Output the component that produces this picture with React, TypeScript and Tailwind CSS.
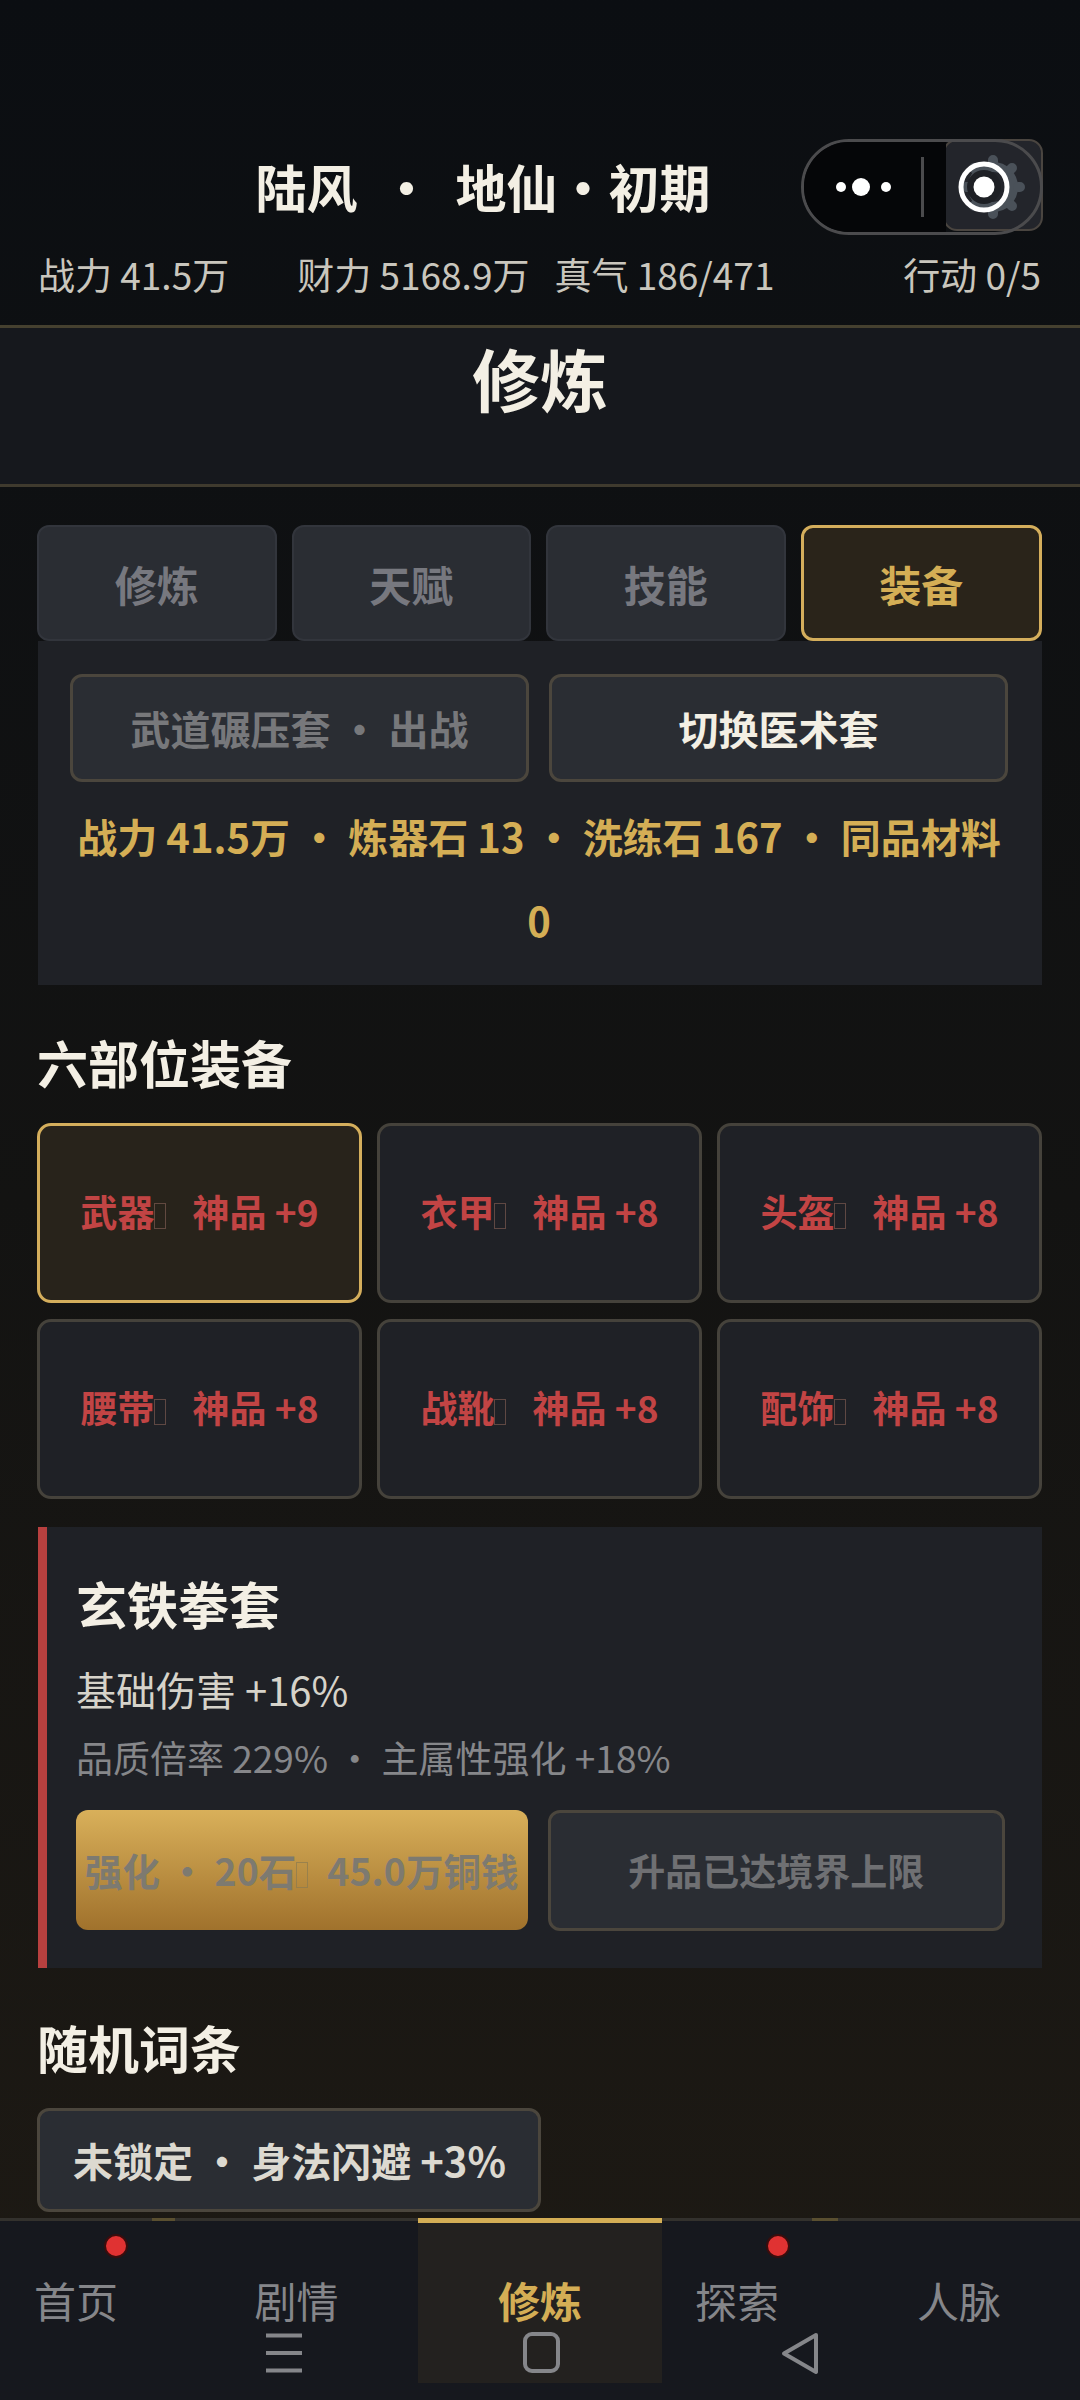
const Tofu = ({ c = "border-[#7a5a50]" }: { c?: string }) => (
  <span className={`inline-block w-[12px] h-[26px] border-[1.5px] ${c} opacity-70 align-[-2px] ml-[0px] mr-[0px]`} />
);

const equip = [
  ["武器", "神品 +9", true],
  ["衣甲", "神品 +8", false],
  ["头盔", "神品 +8", false],
  ["腰带", "神品 +8", false],
  ["战靴", "神品 +8", false],
  ["配饰", "神品 +8", false],
] as const;

const tabs = ["修炼", "天赋", "技能"];

export default function App() {
  return (
    <div
      className="relative w-[1080px] h-[2400px] overflow-hidden flex flex-col bg-gradient-to-b from-[#0b0e12] via-[#131312] to-[#1e1a14] text-[#f3efe4]"
      style={{ fontFamily: '"Noto Sans CJK SC", "Noto Sans", sans-serif' }}
    >
      {/* header */}
      <header className="relative h-[328px] shrink-0 border-b-[3px] border-[#45402f] pt-[148px]">
        <div className="h-[76px] flex items-center justify-center pr-[114px] text-[51px] leading-[76px] font-bold whitespace-pre">
          陆风 <span className="mx-[12px]">·</span> 地仙·初期
        </div>
        <div className="mt-[25px] flex h-[50px] items-center pl-[38px] text-[37px] leading-[50px] text-[#c9c6bd] whitespace-pre">
          <span>战力 41.5万</span>
          <span className="ml-[68px]">财力 5168.9万</span>
          <span className="ml-[25px]">真气 186/471</span>
          <span className="ml-auto mr-[39px]">行动 0/5</span>
        </div>
        {/* settings button + capsule */}
        <div className="absolute left-[943px] top-[139px] w-[100px] h-[92px] rounded-[14px] bg-[#23252b] border-[2px] border-[#4a4540]" />
        <div className="absolute left-[801px] top-[139px] w-[242px] h-[96px] rounded-full border-[3px] border-[#4b4b4d] overflow-hidden">
          <div className="w-[142px] h-full bg-[#050608]" />
        </div>
        <svg className="absolute left-[802px] top-[139px]" width="241" height="96" viewBox="0 0 241 96">
          <g transform="translate(191 48)" stroke="#4a5159" fill="none">
            <circle r="20" strokeWidth="10" />
            <g strokeWidth="10" strokeLinecap="round">
              <path d="M0 -27V-25M0 27V25M27 0H25M-27 0H-25M19 -19L18 -18M19 19L18 18M-19 -19L-18 -18M-19 19L-18 18" />
            </g>
          </g>
          <circle cx="182" cy="48" r="17" fill="#1e2025" />
          <rect x="119" y="18" width="3" height="60" fill="#4b4b4d" />
          <circle cx="39" cy="48" r="5" fill="#fff" />
          <circle cx="59" cy="48" r="9" fill="#fff" />
          <circle cx="84" cy="48" r="5" fill="#fff" />
          <circle cx="182" cy="48" r="23" fill="none" stroke="#fff" strokeWidth="5" />
          <circle cx="182" cy="48" r="10.5" fill="#fff" />
        </svg>
      </header>

      {/* page title */}
      <div className="h-[159px] shrink-0 bg-[#16181d] border-b-[3px] border-[#3f3a2e] text-center text-[68px] leading-[100px] font-bold">
        修炼
      </div>

      {/* content */}
      <main className="flex-1 min-h-0 overflow-hidden pl-[37px] pr-[38px] pt-[38px]">
        <div className="flex gap-[15px]">
          {tabs.map((t) => (
            <div key={t} className="flex-1 h-[116px] rounded-[12px] bg-[#2a2d33] border-[2px] border-[#32353c] flex items-center justify-center text-[42px] font-bold text-[#77787f]">
              {t}
            </div>
          ))}
          <div className="flex-1 h-[116px] rounded-[12px] bg-[#2a241a] border-[3px] border-[#d4ae5c] flex items-center justify-center text-[42px] font-bold text-[#d4ae55]">
            装备
          </div>
        </div>

        <section className="ml-[1px] h-[344px] bg-[#1f2126] pl-[32px] pr-[34px] pt-[33px]">
          <div className="flex gap-[20px]">
            <div className="flex-1 h-[108px] rounded-[12px] bg-[#2a2d33] border-[3px] border-[#4b463d] flex items-center justify-center text-[40px] font-bold text-[#77787b] whitespace-pre">
              武道碾压套 · 出战
            </div>
            <div className="flex-1 h-[108px] rounded-[12px] bg-[#2a2d33] border-[3px] border-[#4b463d] flex items-center justify-center text-[40px] font-bold text-[#f3efe4]">
              切换医术套
            </div>
          </div>
          <p className="mt-[12px] text-center text-[40px] leading-[84px] font-bold text-[#d4ae55]">
            战力 41.5万 · 炼器石 13 · 洗练石 167 · 同品材料 0
          </p>
        </section>

        <h2 className="mt-[40px] text-[51px] leading-[75px] font-bold">六部位装备</h2>

        <div className="mt-[23px] grid grid-cols-3 gap-x-[15px] gap-y-[16px]">
          {equip.map(([a, b, active]) => (
            <div
              key={a}
              className={
                active
                  ? "h-[180px] rounded-[14px] bg-[#28231b] border-[3px] border-[#d4ae5c] flex items-center justify-center pb-[3px] text-[37px] font-bold text-[#c24444] whitespace-pre"
                  : "h-[180px] rounded-[14px] bg-[#1f2126] border-[3px] border-[#45423b] flex items-center justify-center pb-[3px] text-[37px] font-bold text-[#c24444] whitespace-pre"
              }
            >
              <span>
                {a}
                <Tofu />
                <span className="ml-[26px]">{b}</span>
              </span>
            </div>
          ))}
        </div>

        <section className="ml-[1px] mt-[28px] h-[441px] bg-[#1f2126] border-l-[9px] border-[#b8403f] pl-[29px] pr-[37px] pt-[44px]">
          <h3 className="text-[51px] leading-[64px] font-bold">玄铁拳套</h3>
          <p className="mt-[24px] text-[40px] leading-[60px] text-[#d6d3ca]">基础伤害 +16%</p>
          <p className="mt-[11px] text-[37px] leading-[54px] text-[#86878a] whitespace-pre">品质倍率 229% · 主属性强化 +18%</p>
          <div className="mt-[26px] flex gap-[20px]">
            <div className="flex-1 h-[120px] rounded-[12px] bg-gradient-to-b from-[#d9b05a] to-[#a0722c] flex items-center justify-center text-[37.5px] font-bold text-[#7d7a70] whitespace-pre">
              <span>
                强化 · 20石
                <Tofu c="border-[#8a7a50]" />
                <span className="ml-[19px]">45.0万铜钱</span>
              </span>
            </div>
            <div className="flex-1 h-[121px] rounded-[12px] bg-[#2a2d33] border-[3px] border-[#4b463d] flex items-center justify-center text-[37px] font-bold text-[#6f7073]">
              升品已达境界上限
            </div>
          </div>
        </section>

        <h2 className="mt-[42px] text-[51px] leading-[75px] font-bold">随机词条</h2>

        <div className="mt-[23px] inline-flex h-[104px] items-center rounded-[12px] bg-[#2a2d33] border-[3px] border-[#4b463d] pl-[33px] pr-[32px] text-[40px] font-semibold text-[#dcd9d0] whitespace-pre">
          未锁定 · 身法闪避 +3%
        </div>
      </main>

      {/* bottom nav */}
      <nav className="relative h-[182px] shrink-0 bg-[#16181e] border-t-[3px] border-[#33312d] flex text-[42px] text-[#85868a]">
        <div className="w-[152px] pt-[49px] leading-[60px] text-center relative">
          首页
          <span className="absolute left-[104px] top-[13px] w-[24px] h-[24px] rounded-full bg-[#e03232] border-[2px] border-[#3a0d0d]" />
        </div>
        <div className="w-[23px] h-[3px] -mt-[3px] bg-[#5a4f30]" />
        <div className="w-[243px] pt-[49px] leading-[60px] text-center">剧情</div>
        <div className="w-[244px] h-[165px] -mt-[3px] border-t-[5px] border-[#d4ae55] bg-[#23211f] pt-[47px] leading-[60px] text-center font-bold text-[#d4ae55]">
          修炼
        </div>
        <div className="w-[150px] pt-[49px] leading-[60px] text-center relative">
          探索
          <span className="absolute left-[104px] top-[13px] w-[24px] h-[24px] rounded-full bg-[#e03232] border-[2px] border-[#3a0d0d]" />
        </div>
        <div className="w-[26px] h-[3px] -mt-[3px] bg-[#5a4f30]" />
        <div className="flex-1 pt-[49px] leading-[60px] text-center">人脉</div>

        {/* system navigation */}
        <svg className="absolute left-[0px] top-[107px]" width="1080" height="50" viewBox="0 0 1080 50" fill="none" stroke="#85868a">
          <path d="M266 7.5H302M266 25H302M266 42.5H302" strokeWidth="4" />
          <rect x="525" y="6" width="33" height="37" rx="7" strokeWidth="4" />
          <path d="M816 7L784 25.5L816 44Z" strokeWidth="4" strokeLinejoin="round" />
        </svg>
      </nav>
    </div>
  );
}
